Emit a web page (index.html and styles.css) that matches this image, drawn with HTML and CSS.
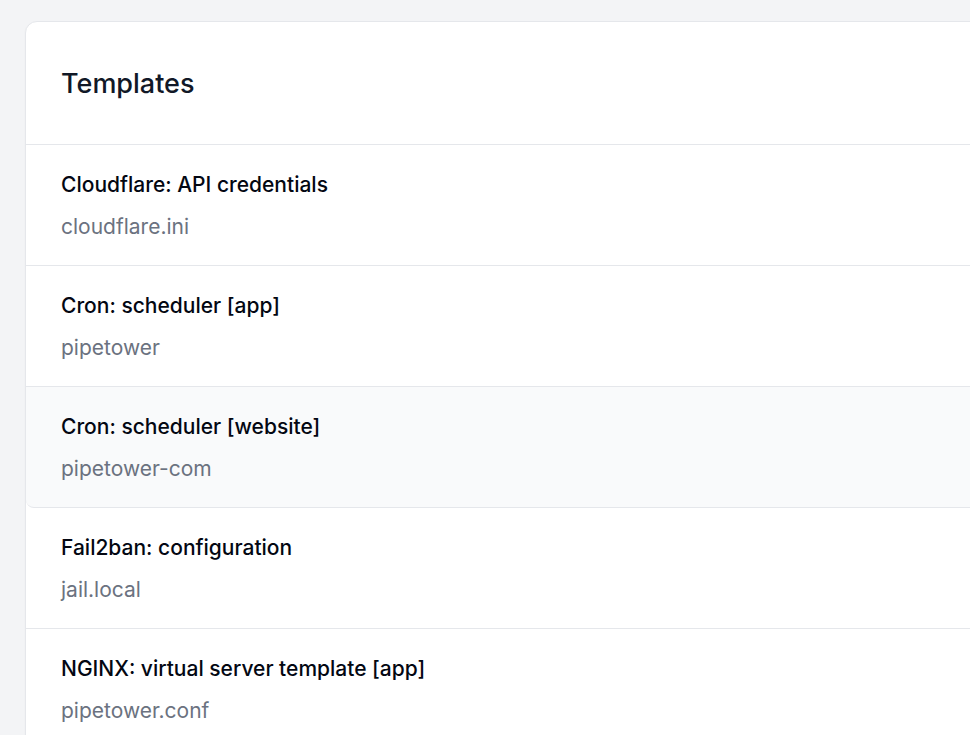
FILE: index.html
```html
<!DOCTYPE html>
<html lang="en">
<head>
<meta charset="utf-8">
<title>Templates</title>
<link rel="stylesheet" href="styles.css">
</head>
<body>
<main class="page">
  <section class="card">
    <header class="card-header">
      <h1 class="card-title">Templates</h1>
    </header>
    <ul class="list">
      <li class="row">
        <div class="row-title">Cloudflare: API credentials</div>
        <div class="row-sub">cloudflare.ini</div>
      </li>
      <li class="row">
        <div class="row-title">Cron: scheduler [app]</div>
        <div class="row-sub">pipetower</div>
      </li>
      <li class="row row-hover">
        <div class="row-title">Cron: scheduler [website]</div>
        <div class="row-sub">pipetower-com</div>
      </li>
      <li class="row">
        <div class="row-title">Fail2ban: configuration</div>
        <div class="row-sub">jail.local</div>
      </li>
      <li class="row">
        <div class="row-title">NGINX: virtual server template [app]</div>
        <div class="row-sub">pipetower.conf</div>
      </li>
    </ul>
  </section>
</main>
</body>
</html>
```
FILE: styles.css
```css
html, body {
  margin: 0;
  padding: 0;
  height: 100%;
  overflow: hidden;
  background: #f3f4f6;
  font-family: Inter, "Noto Sans", "Liberation Sans", sans-serif;
}

.page {
  padding: 21px 0 0 25px;
}

.card {
  width: 1000px;
  background: #ffffff;
  border: 1px solid #e5e7eb;
  border-radius: 12px;
  box-shadow: 0 1px 2px rgba(0, 0, 0, 0.04);
}

.card-header {
  padding: 44px 35px 43px;
  border-bottom: 1px solid #e5e7eb;
}

.card-title {
  margin: 0;
  font-size: 27px;
  line-height: 35px;
  font-weight: 500;
  color: #111827;
}

.list {
  list-style: none;
  margin: 0;
  padding: 0;
}

.row {
  display: flex;
  flex-direction: column;
  gap: 12px;
  padding: 25px 35px 23px;
  border-bottom: 1px solid #e5e7eb;
}

.row-hover {
  background: #f9fafb;
  border-bottom-left-radius: 8px;
}

.row-title {
  font-size: 21px;
  line-height: 30px;
  font-weight: 500;
  color: #030712;
}

.row-sub {
  font-size: 21px;
  line-height: 30px;
  font-weight: 400;
  color: #6b7280;
}
```
